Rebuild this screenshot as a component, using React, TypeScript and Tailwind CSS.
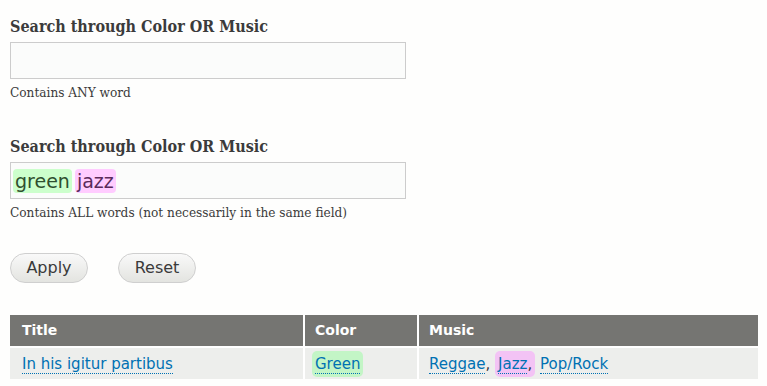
import React from 'react';

const serif = "font-['DejaVu_Serif_Condensed','DejaVu_Serif',serif] font-stretch-condensed";
const sans = "font-['Verdana','DejaVu_Sans',sans-serif]";

function Field({ help, children }: { help: string; children?: React.ReactNode }) {
  return (
    <div className="flex flex-col">
      <label className={`${serif} text-[16px] font-bold text-[#3b3b3b] leading-5 mb-[5px]`}>
        Search through Color OR Music
      </label>
      <div className="w-[396px] h-[37px] border border-[#cccccc] bg-[#fbfcfb] flex items-center gap-[3px] px-[2px]">
        {children}
      </div>
      <div className={`${serif} text-[13.5px] text-[#3b3b3b] leading-5 mt-[3px]`}>{help}</div>
    </div>
  );
}

function Tag({ text, tone }: { text: string; tone: 'green' | 'pink' }) {
  return (
    <span
      className={`${sans} text-[19px] leading-[24px] px-[2px] rounded-[4px] ${
        tone === 'green' ? 'bg-[#ccffcc] text-[#2f4f2f]' : 'bg-[#ffccff] text-[#5a2a5a]'
      }`}
    >
      {text}
    </span>
  );
}

function Btn({ label }: { label: string }) {
  return (
    <button
      className={`${sans} w-[78px] h-[30px] rounded-full border border-[#cfcfcf] bg-gradient-to-b from-[#f9f9f9] to-[#e3e4e0] text-[16px] text-[#3a3a3a]`}
    >
      {label}
    </button>
  );
}

function Lnk({ children }: { children: React.ReactNode }) {
  return (
    <a className="text-[#0071b3] border-b border-dotted border-[#0071b3] leading-5">{children}</a>
  );
}

export default function App() {
  return (
    <div className="w-[767px] h-[386px] bg-[#fefefd] px-[10px] pt-[17px] overflow-hidden">
      <Field help="Contains ANY word" />
      <div className="h-[35px]" />
      <Field help="Contains ALL words (not necessarily in the same field)">
        <Tag text="green" tone="green" />
        <Tag text="jazz" tone="pink" />
      </Field>
      <div className="flex gap-[30px] mt-[31px]">
        <Btn label="Apply" />
        <Btn label="Reset" />
      </div>
      <table className={`${sans} mt-[32px] w-[748px] border-collapse text-[15px]`}>
        <thead>
          <tr className="bg-[#757572] text-white font-bold h-[32px] text-[14px]">
            <th className="w-[294px] text-left pl-[12px] border-r-2 border-white">Title</th>
            <th className="w-[114px] text-left pl-[10px] border-r-2 border-white">Color</th>
            <th className="text-left pl-[10px]">Music</th>
          </tr>
        </thead>
        <tbody>
          <tr className="bg-[#edeeec] h-[32px] border-t-2 border-white">
            <td className="pl-[12px] pt-[2px] border-r-2 border-white">
              <Lnk>In his igitur partibus</Lnk>
            </td>
            <td className="pl-[7px] pt-[2px] border-r-2 border-white">
              <span className="bg-[#c3f5c6] rounded-[5px] px-[3px] py-[4px]">
                <Lnk>Green</Lnk>
              </span>
            </td>
            <td className="pl-[10px] pt-[2px] text-[#3b3b3b]">
              <Lnk>Reggae</Lnk>,{' '}
              <span className="bg-[#f3c3f5] rounded-[5px] px-[3px] py-[4px]">
                <Lnk>Jazz</Lnk>,
              </span>{' '}
              <Lnk>Pop/Rock</Lnk>
            </td>
          </tr>
        </tbody>
      </table>
    </div>
  );
}
